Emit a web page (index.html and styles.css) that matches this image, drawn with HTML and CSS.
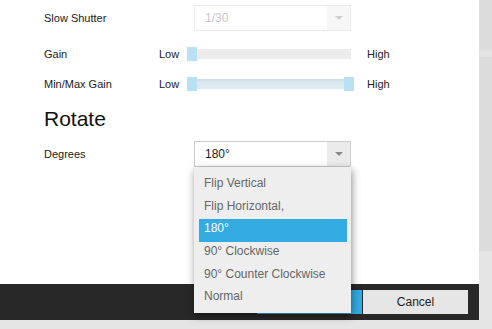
FILE: index.html
```
<!DOCTYPE html>
<html>
  <head>
    <title>Image Settings</title>
    <link rel="stylesheet" href="styles.css">
  </head>
  <body>
    <div class="screen">
      <div class="main">
        <div class="content">
          <div class="row row-select">
            <label class="label">Slow Shutter</label>
            <div class="select disabled">
              <span class="select-value">1/30</span>
              <span class="select-arrow"></span>
            </div>
          </div>

          <div class="row row-slider">
            <label class="label label-short">Gain</label>
            <span class="low">Low</span>
            <div class="track">
              <span class="handle"></span>
            </div>
            <span class="high">High</span>
          </div>

          <div class="row row-slider">
            <label class="label label-short">Min/Max Gain</label>
            <span class="low">Low</span>
            <div class="track range">
              <span class="handle"></span>
              <span class="handle handle-end"></span>
            </div>
            <span class="high">High</span>
          </div>

          <h2 class="heading">Rotate</h2>

          <div class="row row-select">
            <label class="label">Degrees</label>
            <div class="select open">
              <span class="select-value">180°</span>
              <span class="select-arrow"></span>
              <ul class="menu">
                <li>Flip Vertical</li>
                <li>Flip Horizontal,</li>
                <li class="selected">180°</li>
                <li>90° Clockwise</li>
                <li>90° Counter Clockwise</li>
                <li>Normal</li>
              </ul>
            </div>
          </div>
        </div>

        <div class="footer">
          <button class="btn btn-ok">OK</button>
          <button class="btn btn-cancel">Cancel</button>
        </div>
      </div>
      <div class="scrollbar"></div>
    </div>
  </body>
</html>
```

FILE: styles.css
```
body {
  margin: 0;
  background: #e5e5e5;
  font-family: "Liberation Sans", Arial, sans-serif;
  color: #1a1a1a;
}
.screen {
  display: flex;
  height: 329px;
}
.main {
  width: 479px;
  display: flex;
  flex-direction: column;
}
.content {
  height: 284px;
  background: white;
  padding-left: 44px;
  box-sizing: border-box;
  padding-top: 5px;
}
.scrollbar {
  width: 13px;
  height: 251px;
  background: linear-gradient(#dcdcdc 50px, #e3e3e3 50px, #e3e3e3 57px, #dcdcdc 57px);
}
.row {
  display: flex;
  align-items: center;
  font-size: 11px;
}
.row-select {
  height: 26px;
}
.row-slider {
  height: 14px;
  margin-top: 16px;
}
.label {
  width: 150px;
}
.label-short {
  width: 115px;
}
.low {
  width: 28px;
  color: #222;
}
.high {
  margin-left: 16px;
  color: #222;
}
.track {
  position: relative;
  width: 164px;
  height: 10px;
  background: #ececec;
}
.track.range {
  background: linear-gradient(#cbd9e2, #dde9f1 3px, #dfebf3);
}
.handle {
  position: absolute;
  left: 0;
  top: -2px;
  width: 10px;
  height: 14px;
  background: #b9e0f3;
}
.handle-end {
  left: 157px;
}
.heading {
  margin: 16px 0 10px;
  font-size: 21px;
  line-height: 24px;
  font-weight: normal;
  color: #111;
}

/* select box */
.select {
  position: relative;
  width: 157px;
  height: 26px;
  box-sizing: border-box;
  border: 1px solid #cccccc;
  display: flex;
  align-items: center;
  font-size: 12px;
}
.select-value {
  flex: 1;
  padding-left: 10px;
}
.select-arrow {
  width: 23px;
  height: 24px;
  background: #ebebeb;
  display: flex;
  align-items: center;
  justify-content: center;
}
.select-arrow::after {
  content: "";
  border-left: 4px solid transparent;
  border-right: 4px solid transparent;
  border-top: 4px solid #8a8a8a;
}
.select.disabled {
  border-color: #ebebeb;
  color: #c8c8c8;
}
.select.disabled .select-arrow {
  background: #f7f7f7;
}
.select.disabled .select-arrow::after {
  border-top-color: #d0d0d0;
}

/* dropdown */
.menu {
  position: absolute;
  left: -1px;
  top: 25px;
  width: 157px;
  margin: 0;
  padding: 7px 4px 3px 5px;
  box-sizing: border-box;
  list-style: none;
  background: #eeeeee;
  box-shadow: 1px 3px 8px rgba(0, 0, 0, 0.45);
  z-index: 2;
}
.menu li {
  height: 22.7px;
  line-height: 19px;
  padding-left: 5px;
  color: #666;
}
.menu li.selected {
  background: #34abe0;
  color: white;
}

/* footer */
.footer {
  height: 36px;
  background: #282828;
  display: flex;
  justify-content: flex-end;
  align-items: center;
  gap: 1px;
  padding-right: 11px;
}
.btn {
  width: 105px;
  height: 24px;
  border: none;
  font-family: inherit;
  font-size: 12px;
  padding: 0;
}
.btn-ok {
  background: #34abe0;
  color: white;
}
.btn-cancel {
  background: #e6e6e6;
  color: #222;
}
```
